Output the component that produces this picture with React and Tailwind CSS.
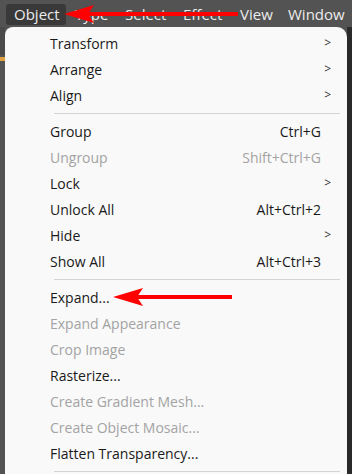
const TOP = [
  ['Object', 'w-[60px] pl-[8px] bg-[#393939] rounded-[3px]'],
  ['Type', 'ml-[9px] w-[50px]'],
  ['Select', 'w-[58px]'],
  ['Effect', 'w-[57px]'],
  ['View', 'w-[48px]'],
  ['Window', ''],
]

const ITEMS = [
  { label: 'Transform', sub: true },
  { label: 'Arrange', sub: true },
  { label: 'Align', sub: true },
  'sep',
  { label: 'Group', key: 'Ctrl+G' },
  { label: 'Ungroup', key: 'Shift+Ctrl+G', off: true },
  { label: 'Lock', sub: true },
  { label: 'Unlock All', key: 'Alt+Ctrl+2' },
  { label: 'Hide', sub: true },
  { label: 'Show All', key: 'Alt+Ctrl+3' },
  'sep',
  { label: 'Expand...' },
  { label: 'Expand Appearance', off: true },
  { label: 'Crop Image', off: true },
  { label: 'Rasterize...' },
  { label: 'Create Gradient Mesh...', off: true },
  { label: 'Create Object Mosaic...', off: true },
  { label: 'Flatten Transparency...' },
  'sep',
]

const Arrow = ({ x1, x2, y }) => (
  <svg className="absolute left-0 top-0" width="352" height="474">
    <line x1={x2} y1={y} x2={x1 + 22} y2={y} stroke="#f00" strokeWidth="4" />
    <path d={`M${x1} ${y} L${x1 + 30} ${y - 9} L${x1 + 24} ${y} L${x1 + 30} ${y + 9} Z`} fill="#f00" />
  </svg>
)

export default function App() {
  return (
    <div className="relative w-[352px] h-[474px] overflow-hidden bg-[#535353] font-['Open_Sans',sans-serif]">
      <div className="flex h-[27px] items-start pt-[4px] pl-[6px] text-[15px] text-[#ececec] whitespace-nowrap">
        {TOP.map(([t, cls]) => (
          <div key={t} className={`h-[21px] leading-[21px] ${cls}`}>
            {t}
          </div>
        ))}
      </div>
      <div className="flex h-[447px]">
        <div className="w-[5px] flex flex-col">
          <div className="h-[28px] bg-[#4a4a4a]" />
          <div className="h-[4px] bg-[#e0a040] mt-[2px]" />
        </div>
        <div className="w-[342px] bg-[#f9f9f9] rounded-tl-[8px] rounded-tr-[10px] pt-[3px] text-[14px] text-[#1a1a1a]">
          {ITEMS.map((it, i) =>
            it === 'sep' ? (
              <div key={i} className="h-[10px] flex items-center pl-[49px] pr-[7px]">
                <div className="h-px w-full bg-[#d4d4d4]" />
              </div>
            ) : (
              <div key={i} className={`h-[26px] flex items-center pl-[45px] pr-[16px] ${it.off ? 'text-[#a3a3a3]' : ''}`}>
                <span className="flex-1">{it.label}</span>
                {it.key && <span className="mr-[10px]">{it.key}</span>}
                {it.sub && <span className="text-[12px] text-[#333]">&gt;</span>}
              </div>
            ),
          )}
        </div>
        <div className="flex-1 bg-[#2a2a2a]" />
      </div>
      <Arrow x1={64} x2={238} y={14} />
      <Arrow x1={113} x2={232} y={297} />
    </div>
  )
}
